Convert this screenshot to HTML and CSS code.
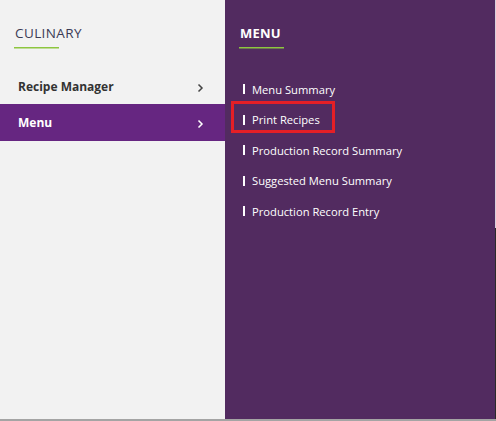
FILE: index.html
```html
<!DOCTYPE html>
<html lang="en">
<head>
    <meta charset="UTF-8">
    <meta name="viewport" content="width=device-width, initial-scale=1.0">
    <title>Culinary Menu</title>
    <link rel="stylesheet" href="styles.css">
</head>
<body>
    <div class="flyout">
        <div class="side-nav">
            <h2 class="nav-title">CULINARY</h2>
            <ul class="nav-list">
                <li class="nav-item">
                    <span>Recipe Manager</span>
                    <svg class="chevron" width="7" height="10" viewBox="0 0 7 10"><path d="M1.5 1.5 L5 5 L1.5 8.5" fill="none" stroke="currentColor" stroke-width="1.5"/></svg>
                </li>
                <li class="nav-item active">
                    <span>Menu</span>
                    <svg class="chevron" width="7" height="10" viewBox="0 0 7 10"><path d="M1.5 1.5 L5 5 L1.5 8.5" fill="none" stroke="currentColor" stroke-width="1.5"/></svg>
                </li>
            </ul>
        </div>
        <div class="sub-nav">
            <h2 class="nav-title">MENU</h2>
            <ul class="sub-list">
                <li class="sub-item">Menu Summary</li>
                <li class="sub-item highlighted">Print Recipes</li>
                <li class="sub-item">Production Record Summary</li>
                <li class="sub-item">Suggested Menu Summary</li>
                <li class="sub-item">Production Record Entry</li>
            </ul>
        </div>
        <div class="edge"></div>
    </div>
</body>
</html>
```

FILE: styles.css
```css
body {
    margin: 0;
    background-color: #a4a4a4;
    font-family: "Open Sans", "Noto Sans", sans-serif;
}
.flyout {
    display: flex;
    height: 419px;
    width: 496px;
    box-shadow: 0 1px 2px rgba(0, 0, 0, 0.3);
}
.side-nav {
    width: 225px;
    background-color: #f2f2f2;
}
.sub-nav {
    width: 270px;
    background-color: #522b60;
}
.edge {
    width: 1px;
    background: linear-gradient(#d8d0dc 0, #d8d0dc 228px, #2a2a2a 228px);
}

/* section heading with a short green rule under it */
.nav-title {
    margin: 0 0 0 14px;
    padding: 24px 0 0 1px;
    font-size: 13px;
    font-weight: normal;
    line-height: 18px;
}
.nav-title::after {
    content: "";
    display: block;
    width: 45px;
    height: 1px;
    margin: 5px 0 0 -1px;
    background-color: #8dc63f;
    box-shadow: 0 0.5px 0 #8dc63f;
}
.side-nav .nav-title {
    color: #3b3b55;
    font-size: 13.5px;
    letter-spacing: 0.4px;
}
.sub-nav .nav-title {
    color: #ffffff;
    font-weight: bold;
    letter-spacing: 0.2px;
}

.nav-list {
    list-style: none;
    margin: 20px 0 0;
    padding: 0;
}
.nav-item {
    display: flex;
    justify-content: space-between;
    align-items: center;
    height: 36px;
    padding: 0 21px 0 18px;
    font-size: 12px;
    font-weight: bold;
    color: #333333;
}
.nav-item .chevron {
    color: #444444;
    margin-top: 3px;
}
.nav-item.active {
    height: 37px;
    background-color: #662681;
    color: #ffffff;
}
.nav-item.active .chevron {
    color: #ffffff;
}

.sub-list {
    list-style: none;
    margin: 25px 0 0;
    padding: 0 0 0 9px;
}
.sub-item {
    box-sizing: border-box;
    display: flex;
    align-items: center;
    width: fit-content;
    height: 26px;
    margin-bottom: 4.6px;
    padding: 6px 12px 0 9px;
    font-size: 11.2px;
    color: #ffffff;
}
.sub-item::before {
    content: "";
    width: 2px;
    height: 10px;
    margin-right: 7px;
    background-color: #ffffff;
}
.sub-item.highlighted {
    outline: 3px solid #e51f26;
}
```
